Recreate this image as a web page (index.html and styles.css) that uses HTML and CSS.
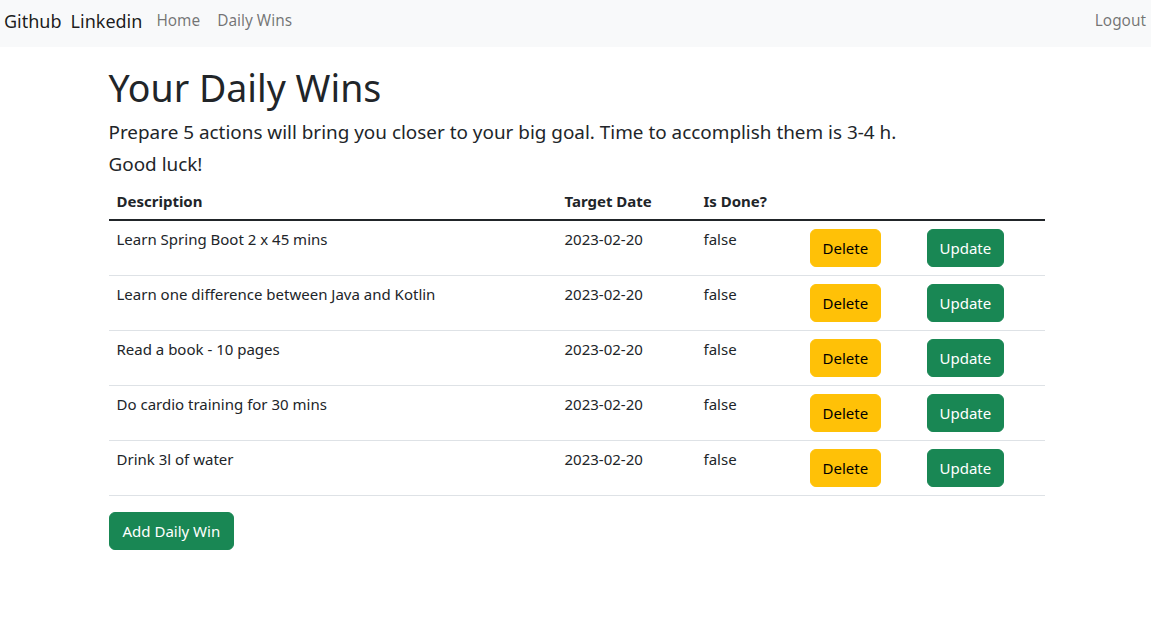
FILE: index.html
```html
<!DOCTYPE html>
<html lang="en">
<head>
<meta charset="utf-8">
<title>Your Daily Wins</title>
<link rel="stylesheet" href="styles.css">
</head>
<body>
<nav class="navbar">
  <div class="nav-left">
    <a class="brand" href="#">Github</a>
    <a class="brand" href="#">Linkedin</a>
    <ul class="nav-links">
      <li><a class="nav-link" href="#">Home</a></li>
      <li><a class="nav-link" href="#">Daily Wins</a></li>
    </ul>
  </div>
  <ul class="nav-links">
    <li><a class="nav-link" href="#">Logout</a></li>
  </ul>
</nav>
<main class="container">
  <h1 class="title">Your Daily Wins</h1>
  <p class="lead">Prepare 5 actions will bring you closer to your big goal. Time to accomplish them is 3-4 h.<br>Good luck!</p>
  <table class="table">
    <thead>
      <tr>
        <th class="col-desc">Description</th>
        <th class="col-date">Target Date</th>
        <th class="col-done">Is Done?</th>
        <th class="col-del"></th>
        <th class="col-upd"></th>
      </tr>
    </thead>
    <tbody>
      <tr>
        <td>Learn Spring Boot 2 x 45 mins</td>
        <td>2023-02-20</td>
        <td>false</td>
        <td><button class="btn btn-warning">Delete</button></td>
        <td><button class="btn btn-success">Update</button></td>
      </tr>
      <tr>
        <td>Learn one difference between Java and Kotlin</td>
        <td>2023-02-20</td>
        <td>false</td>
        <td><button class="btn btn-warning">Delete</button></td>
        <td><button class="btn btn-success">Update</button></td>
      </tr>
      <tr>
        <td>Read a book - 10 pages</td>
        <td>2023-02-20</td>
        <td>false</td>
        <td><button class="btn btn-warning">Delete</button></td>
        <td><button class="btn btn-success">Update</button></td>
      </tr>
      <tr>
        <td>Do cardio training for 30 mins</td>
        <td>2023-02-20</td>
        <td>false</td>
        <td><button class="btn btn-warning">Delete</button></td>
        <td><button class="btn btn-success">Update</button></td>
      </tr>
      <tr>
        <td>Drink 3l of water</td>
        <td>2023-02-20</td>
        <td>false</td>
        <td><button class="btn btn-warning">Delete</button></td>
        <td><button class="btn btn-success">Update</button></td>
      </tr>
    </tbody>
  </table>
  <button class="btn btn-success btn-add">Add Daily Win</button>
</main>
</body>
</html>
```
FILE: styles.css
```css
* { box-sizing: border-box; }
html, body { margin: 0; padding: 0; }
body {
  font-family: "Segoe UI", "Noto Sans", "Open Sans", sans-serif;
  font-size: 15px;
  line-height: 24px;
  color: #212529;
  background: #fff;
}
a { text-decoration: none; }

.navbar {
  height: 47px;
  background: #f8f9fa;
  display: flex;
  align-items: center;
  justify-content: space-between;
  padding: 0 5px 6px 4px;
}
.nav-left { display: flex; align-items: center; }
.brand {
  font-size: 18px;
  color: rgba(0,0,0,.9);
  margin-right: 9px;
}
.nav-links {
  list-style: none;
  margin: 0;
  padding: 0;
  display: flex;
  gap: 17px;
}
.nav-left .nav-links { margin-left: 5px; }
.nav-link { color: rgba(0,0,0,.55); font-size: 15.4px; }

.container {
  width: 938px;
  margin: 0 auto;
  padding: 18px 0 0 2px;
}
.title {
  font-size: 37.5px;
  font-weight: 400;
  line-height: 46px;
  margin: 0 0 5px;
}
.lead {
  font-size: 18.9px;
  line-height: 32px;
  margin: 0;
}
.table {
  width: 100%;
  border-collapse: collapse;
  margin-bottom: 16px;
}
.table th, .table td {
  padding: 8px;
  text-align: left;
  vertical-align: top;
}
.table th {
  font-weight: 700;
  padding: 9px 8px 6px;
  border-bottom: 2px solid #212529;
}
.table td {
  line-height: 21px;
  border-bottom: 1px solid #dee2e6;
}
.col-desc { width: 448px; }
.col-date { width: 139px; }
.col-done { width: 106px; }
.col-del { width: 117px; }
.col-upd { width: 126px; }

.btn {
  font-family: inherit;
  font-size: 15px;
  line-height: 24px;
  padding: 6px 12px;
  border: 1px solid transparent;
  border-radius: 6px;
  cursor: pointer;
}
.btn-add { padding: 6px 13px; }
.btn-warning { background: #ffc107; border-color: #ffc107; color: #000; }
.btn-success { background: #198754; border-color: #198754; color: #fff; }
```
